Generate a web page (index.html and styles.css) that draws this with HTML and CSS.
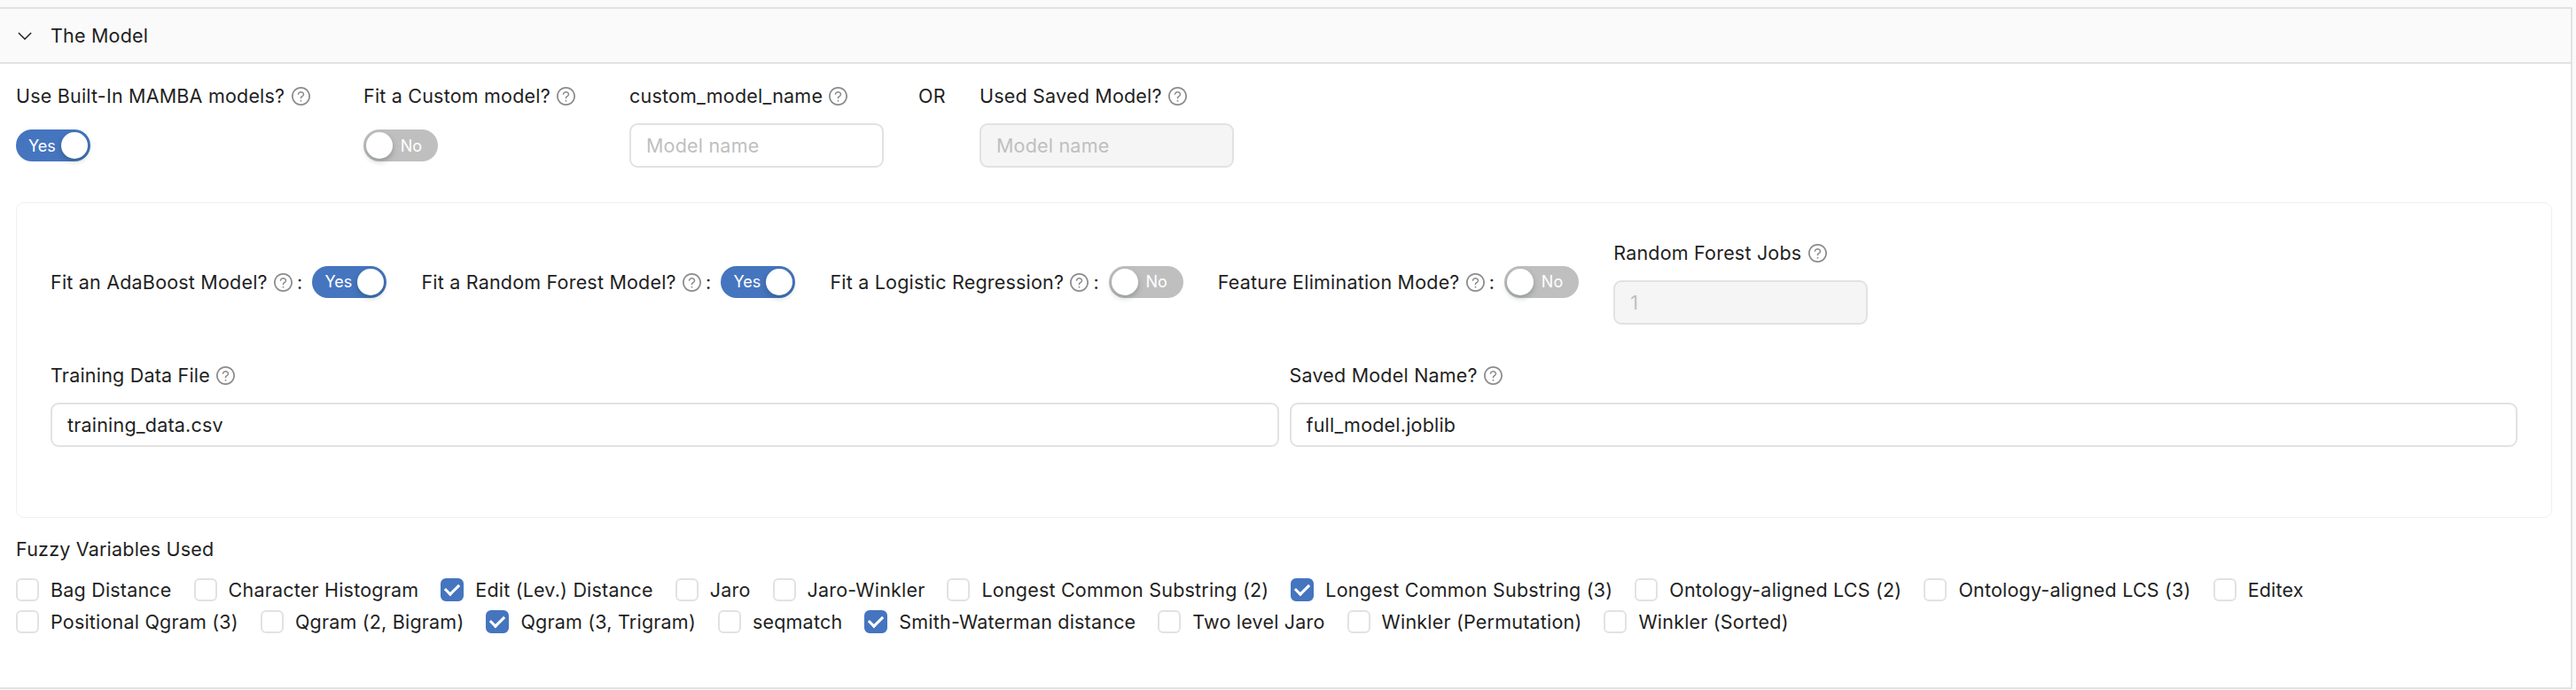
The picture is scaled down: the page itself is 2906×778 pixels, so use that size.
FILE: index.html
```html
<!DOCTYPE html>
<html lang="en">
<head>
    <meta charset="UTF-8">
    <title>The Model</title>
    <link rel="stylesheet" href="styles.css">
</head>
<body>
    <svg class="sprite" aria-hidden="true">
        <symbol id="help" viewBox="64 64 896 896">
            <path d="M512 64C264.6 64 64 264.6 64 512s200.6 448 448 448 448-200.6 448-448S759.4 64 512 64zm0 820c-205.4 0-372-166.6-372-372s166.6-372 372-372 372 166.6 372 372-166.6 372-372 372z"/>
            <path d="M623.6 316.7C593.6 290.4 554 276 512 276s-81.6 14.5-111.6 40.7C369.2 344 352 380.7 352 420v7.6c0 4.4 3.6 8 8 8h48c4.4 0 8-3.6 8-8V420c0-44.1 43.1-80 96-80s96 35.9 96 80c0 31.1-22 59.6-56.1 72.7-21.2 8.1-39.2 22.3-52.1 40.9-13.1 19-19.9 41.8-19.9 64.9V620c0 4.4 3.6 8 8 8h48c4.4 0 8-3.6 8-8v-22.7a48.3 48.3 0 0 1 30.9-44.8c59-22.7 97.1-74.7 97.1-132.5.1-39.3-17.1-76-48.3-103.3z"/>
            <path d="M472 732a40 40 0 1 0 80 0 40 40 0 1 0-80 0z"/>
        </symbol>
    </svg>

    <section class="panel">
        <header class="panel-head">
            <svg class="chevron" viewBox="0 0 18 10"><path d="M1 1l8 8 8-8"/></svg>
            <span>The Model</span>
        </header>

        <div class="panel-body">
            <div class="model-row">
                <div class="field">
                    <label class="field-label">Use Built-In MAMBA models? <svg class="help"><use href="#help"/></svg></label>
                    <div class="control"><button class="toggle on"><span>Yes</span><i class="knob"></i></button></div>
                </div>
                <div class="field">
                    <label class="field-label">Fit a Custom model? <svg class="help"><use href="#help"/></svg></label>
                    <div class="control"><button class="toggle off"><span>No</span><i class="knob"></i></button></div>
                </div>
                <div class="field">
                    <label class="field-label">custom_model_name <svg class="help"><use href="#help"/></svg></label>
                    <input class="text-input" type="text" placeholder="Model name">
                </div>
                <div class="or-text">OR</div>
                <div class="field">
                    <label class="field-label">Used Saved Model? <svg class="help"><use href="#help"/></svg></label>
                    <input class="text-input" type="text" placeholder="Model name" disabled>
                </div>
            </div>

            <div class="card">
                <div class="fit-row">
                    <div class="inline-field">
                        <label>Fit an AdaBoost Model? <svg class="help"><use href="#help"/></svg><span class="colon">:</span></label>
                        <button class="toggle on"><span>Yes</span><i class="knob"></i></button>
                    </div>
                    <div class="inline-field">
                        <label>Fit a Random Forest Model? <svg class="help"><use href="#help"/></svg><span class="colon">:</span></label>
                        <button class="toggle on"><span>Yes</span><i class="knob"></i></button>
                    </div>
                    <div class="inline-field">
                        <label>Fit a Logistic Regression? <svg class="help"><use href="#help"/></svg><span class="colon">:</span></label>
                        <button class="toggle off"><span>No</span><i class="knob"></i></button>
                    </div>
                    <div class="inline-field">
                        <label>Feature Elimination Mode? <svg class="help"><use href="#help"/></svg><span class="colon">:</span></label>
                        <button class="toggle off"><span>No</span><i class="knob"></i></button>
                    </div>
                    <div class="field">
                        <label class="field-label">Random Forest Jobs <svg class="help"><use href="#help"/></svg></label>
                        <input class="text-input" type="text" value="1" disabled>
                    </div>
                </div>
                <div class="file-row">
                    <div class="field">
                        <label class="field-label">Training Data File <svg class="help"><use href="#help"/></svg></label>
                        <input class="text-input wide" type="text" value="training_data.csv">
                    </div>
                    <div class="field">
                        <label class="field-label">Saved Model Name? <svg class="help"><use href="#help"/></svg></label>
                        <input class="text-input wide" type="text" value="full_model.joblib">
                    </div>
                </div>
            </div>

            <div class="fuzzy">
                <div class="field-label">Fuzzy Variables Used</div>
                <div class="check-row">
                    <label class="check"><input type="checkbox">Bag Distance</label>
                    <label class="check"><input type="checkbox">Character Histogram</label>
                    <label class="check"><input type="checkbox" checked>Edit (Lev.) Distance</label>
                    <label class="check"><input type="checkbox">Jaro</label>
                    <label class="check"><input type="checkbox">Jaro-Winkler</label>
                    <label class="check"><input type="checkbox">Longest Common Substring (2)</label>
                    <label class="check"><input type="checkbox" checked>Longest Common Substring (3)</label>
                    <label class="check"><input type="checkbox">Ontology-aligned LCS (2)</label>
                    <label class="check"><input type="checkbox">Ontology-aligned LCS (3)</label>
                    <label class="check"><input type="checkbox">Editex</label>
                </div>
                <div class="check-row">
                    <label class="check"><input type="checkbox">Positional Qgram (3)</label>
                    <label class="check"><input type="checkbox">Qgram (2, Bigram)</label>
                    <label class="check"><input type="checkbox" checked>Qgram (3, Trigram)</label>
                    <label class="check"><input type="checkbox">seqmatch</label>
                    <label class="check"><input type="checkbox" checked>Smith-Waterman distance</label>
                    <label class="check"><input type="checkbox">Two level Jaro</label>
                    <label class="check"><input type="checkbox">Winkler (Permutation)</label>
                    <label class="check"><input type="checkbox">Winkler (Sorted)</label>
                </div>
            </div>
        </div>
    </section>
</body>
</html>
```

FILE: styles.css
```css
body {
    margin: 0;
    background: #fafafa;
    color: #1f1f1f;
    font-family: "Inter", "Liberation Sans", sans-serif;
    font-size: 21.5px;
    letter-spacing: 0.2px;
    line-height: 32px;
}
.sprite {
    display: none;
}
.panel {
    box-sizing: border-box;
    width: 2902px;
    height: 769px;
    margin-top: 8px;
    background: #fff;
    border: 2px solid #e2e2e2;
    border-left: none;
}
.panel-head {
    display: flex;
    align-items: center;
    height: 60px;
    padding-left: 20px;
    background: #fafafa;
    border-bottom: 2px solid #e2e2e2;
}
.chevron {
    width: 16px;
    height: 9px;
    margin-right: 21px;
    fill: none;
    stroke: #1f1f1f;
    stroke-width: 1.6;
}
.panel-body {
    padding: 20px 21px 0 18px;
}
.help {
    width: 21px;
    height: 21px;
    margin-left: 1px;
    fill: #8c8c8c;
    vertical-align: -3px;
}

.field-label {
    display: block;
    height: 32px;
    margin-bottom: 15px;
    white-space: nowrap;
}
.control {
    display: flex;
    align-items: center;
    height: 50px;
}
.text-input {
    box-sizing: border-box;
    display: block;
    width: 287px;
    height: 50px;
    padding: 0 17px;
    border: 2px solid #e2e2e2;
    border-radius: 9px;
    background: #fff;
    color: #1f1f1f;
    font: inherit;
    letter-spacing: inherit;
}
.text-input::placeholder {
    color: #bfbfbf;
}
.text-input:disabled {
    background: #f5f5f5;
    color: #bfbfbf;
}
.text-input.wide {
    width: 100%;
}

.toggle {
    display: flex;
    align-items: center;
    justify-content: space-between;
    box-sizing: border-box;
    width: 84px;
    height: 36px;
    border: none;
    border-radius: 18px;
    color: #fff;
    font-family: inherit;
    font-size: 18px;
}
.toggle.on {
    padding: 0 3px 0 14px;
    background: #4575bf;
}
.toggle.off {
    flex-direction: row-reverse;
    padding: 0 18px 0 3px;
    background: #bfbfbf;
}
.knob {
    width: 30px;
    height: 30px;
    border-radius: 50%;
    background: #fff;
    box-shadow: 0 3px 6px rgba(0, 35, 11, 0.25);
}

.model-row {
    display: grid;
    grid-template-columns: 392px 300px 326px 69px 287px;
}
.or-text {
    height: 32px;
}

.card {
    margin-top: 39px;
    padding: 40px 38px 79px 38px;
    border: 1px solid #f0f0f0;
    border-radius: 9px;
}
.fit-row {
    display: flex;
    align-items: center;
    gap: 39px;
}
.inline-field {
    display: flex;
    align-items: center;
}
.colon {
    margin: 0 11px 0 5px;
}
.file-row {
    display: grid;
    grid-template-columns: 1fr 1fr;
    gap: 12px;
    margin-top: 41px;
}

.fuzzy {
    margin-top: 19px;
}
.fuzzy .field-label {
    margin-bottom: 17px;
}
.check-row {
    display: flex;
    gap: 25px;
    margin-bottom: 10px;
}
.check {
    display: flex;
    align-items: center;
    gap: 13px;
    height: 26px;
    white-space: nowrap;
}
.check input {
    appearance: none;
    display: flex;
    justify-content: center;
    box-sizing: border-box;
    width: 26px;
    height: 26px;
    margin: 0;
    border: 2px solid #e2e2e2;
    border-radius: 6px;
    background: #fff;
}
.check input:checked {
    background: #4575bf;
    border-color: #4575bf;
}
.check input:checked::after {
    content: "";
    box-sizing: border-box;
    width: 10px;
    height: 16px;
    margin-top: 1px;
    border: solid #fff;
    border-width: 0 3px 3px 0;
    transform: rotate(45deg);
}
```
